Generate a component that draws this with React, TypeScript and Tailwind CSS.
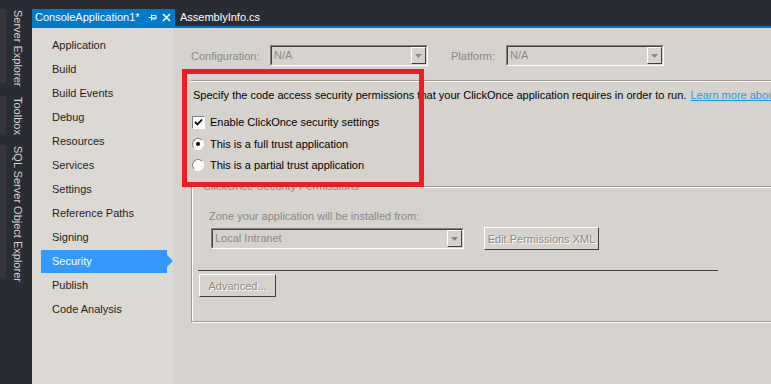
import React from 'react';

const navItems = [
  'Application',
  'Build',
  'Build Events',
  'Debug',
  'Resources',
  'Services',
  'Settings',
  'Reference Paths',
  'Signing',
  'Security',
  'Publish',
  'Code Analysis',
];

function SideTab({ label, h, mt }: { label: string; h: string; mt: string }) {
  return (
    <div className={`flex ${h} ${mt}`}>
      <div className="w-[6px] shrink-0 bg-[#33363d]" />
      <div className="whitespace-nowrap pl-[5px] pt-[1px] text-[11px] leading-[13px] text-[#d4d4d4] [writing-mode:vertical-rl]">
        {label}
      </div>
    </div>
  );
}

function Dropdown({ value, w }: { value: string; w: string }) {
  return (
    <div className={`flex h-[21px] ${w} border border-t-[#808080] border-l-[#808080] border-b-white border-r-white`}>
      <div className="flex flex-1 border border-t-[#404040] border-l-[#404040] border-b-[#d6d3ce] border-r-[#d6d3ce]">
        <div className="flex-1 pl-[2px] text-[11px] leading-[17px] text-[#8c8985]">{value}</div>
        <div className="flex w-[15px] items-center justify-center border border-t-white border-l-white border-b-[#404040] border-r-[#404040] bg-[#d6d3ce]">
          <svg width="7" height="4" viewBox="0 0 7 4">
            <path d="M0 0h7L3.5 4z" fill="#8c8985" />
          </svg>
        </div>
      </div>
    </div>
  );
}

function DisabledButton({ label, w }: { label: string; w: string }) {
  return (
    <div className={`flex h-[23px] ${w} items-center justify-center border border-t-white border-l-white border-b-[#404040] border-r-[#404040] bg-[#d6d3ce] text-[11px] text-[#8c8985] [text-shadow:1px_1px_0_#ffffff]`}>
      {label}
    </div>
  );
}

export default function App() {
  return (
    <div className="flex h-[384px] w-[771px] overflow-hidden bg-[#292c33] font-['Liberation_Sans',Arial,sans-serif]">
      <div className="flex w-[32px] shrink-0 flex-col">
        <SideTab label="Server Explorer" h="h-[74px]" mt="mt-[9px]" />
        <SideTab label="Toolbox" h="h-[38px]" mt="mt-[13px]" />
        <SideTab label="SQL Server Object Explorer" h="h-[133px]" mt="mt-[11px]" />
      </div>

      <div className="flex flex-1 flex-col">
        <div className="flex h-[26px] items-end">
          <div className="flex h-[17px] w-[143px] items-center bg-[#007acc] pl-[3px] text-[11px] text-white">
            <span className="whitespace-nowrap">ConsoleApplication1*</span>
            <svg className="ml-[8px] shrink-0" width="9" height="9" viewBox="0 0 9 9">
              <path d="M0.5 4.5h2.5M3.5 1.5v6M3.5 2.5h4.5v3.5H3.5M3.5 5h4.5" stroke="#ffffff" strokeWidth="1" fill="none" />
            </svg>
            <svg className="ml-[5px] shrink-0" width="9" height="9" viewBox="0 0 9 9">
              <path d="M1 1l7 7M8 1L1 8" stroke="#ffffff" strokeWidth="1.6" />
            </svg>
          </div>
          <div className="flex h-[17px] items-center pl-[5px] text-[11px] text-white">AssemblyInfo.cs</div>
        </div>
        <div className="h-[2px] bg-[#007acc]" />

        <div className="flex flex-1">
          <div className="flex w-[141px] shrink-0 flex-col bg-[#dcd8d3] pt-[5px]">
            {navItems.map((item) =>
              item === 'Security' ? (
                <div key={item} className="ml-[9px] flex h-[24px] items-center">
                  <div className="flex h-[23px] w-[127px] items-center bg-[#3399ff] pl-[11px] text-[11px] text-white">
                    {item}
                  </div>
                  <div className="h-0 w-0 border-y-[6px] border-l-[6px] border-y-transparent border-l-[#3399ff]" />
                </div>
              ) : (
                <div key={item} className="flex h-[24px] items-center pl-[20px] text-[11px] text-[#1e1e1e]">
                  {item}
                </div>
              )
            )}
          </div>

          <div className="relative flex flex-1 flex-col bg-[#d6d3ce] pl-[18px] text-[11px] leading-[16px]">
            <div className="mt-[17px] flex items-center">
              <span className="w-[79px] text-[#8c8985]">Configuration:</span>
              <Dropdown value="N/A" w="w-[158px]" />
              <span className="ml-[23px] w-[55px] text-[#8c8985]">Platform:</span>
              <Dropdown value="N/A" w="w-[158px]" />
            </div>

            <div className="mt-[14px] h-[2px] border-t border-t-[#9f9c98] border-b border-b-white" />

            <div className="mt-[5px] flex h-[16px] items-center whitespace-nowrap pl-[2px] text-[#000000]">
              <span>Specify the code access security permissions that your ClickOnce application requires in order to run.</span>
              <span className="ml-[4px] text-[#1a9bf0] underline">Learn more about</span>
            </div>

            <div className="mt-[11px] flex h-[16px] items-center pl-[1px]">
              <div className="flex h-[13px] w-[13px] items-center justify-center border border-t-[#808080] border-l-[#808080] border-b-white border-r-white bg-white">
                <svg width="9" height="9" viewBox="0 0 9 9">
                  <path d="M1 4l2.5 2.5L8 1.5" stroke="#000000" strokeWidth="1.8" fill="none" />
                </svg>
              </div>
              <span className="ml-[5px] text-black">Enable ClickOnce security settings</span>
            </div>

            <div className="mt-[6px] flex h-[16px] items-center pl-[1px]">
              <div className="flex h-[12px] w-[12px] items-center justify-center rounded-full border border-t-[#808080] border-l-[#808080] border-b-white border-r-white bg-white">
                <div className="h-[4px] w-[4px] rounded-full bg-black" />
              </div>
              <span className="ml-[6px] text-black">This is a full trust application</span>
            </div>

            <div className="mt-[5px] flex h-[16px] items-center pl-[1px]">
              <div className="h-[12px] w-[12px] rounded-full border border-t-[#808080] border-l-[#808080] border-b-white border-r-white bg-white" />
              <span className="ml-[6px] text-black">This is a partial trust application</span>
            </div>

            <div className="relative mt-[13px] h-[136px] border border-[#9f9c98] border-r-0 shadow-[inset_1px_1px_0_#ffffff,1px_1px_0_#ffffff]">
              <div className="absolute left-[10px] top-[-9px] bg-[#d6d3ce] px-[1px] text-[#8c8985]">ClickOnce Security Permissions</div>
              <div className="mt-[21px] pl-[17px] text-[#8c8985]">Zone your application will be installed from:</div>
              <div className="mt-[3px] flex items-center pl-[19px]">
                <Dropdown value="Local Intranet" w="w-[253px]" />
                <div className="ml-[20px]">
                  <DisabledButton label="Edit Permissions XML" w="w-[115px]" />
                </div>
              </div>
              <div className="ml-[6px] mt-[20px] h-[1px] w-[520px] bg-[#404040]" />
              <div className="ml-[7px] mt-[3px]">
                <DisabledButton label="Advanced..." w="w-[77px]" />
              </div>
            </div>

            <div className="pointer-events-none absolute left-[9px] top-[41px] h-[118px] w-[242px] border-[5px] border-[#ee1c24]" />
          </div>
        </div>
      </div>
    </div>
  );
}
